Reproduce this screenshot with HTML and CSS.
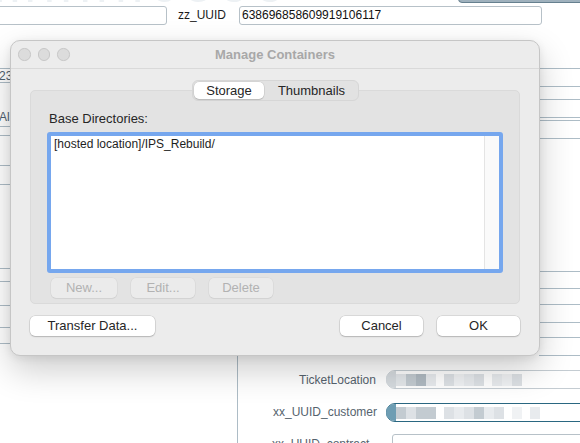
FILE: index.html
```html
<!DOCTYPE html>
<html>
<head>
<meta charset="utf-8">
<link rel="stylesheet" href="styles.css">
</head>
<body>
<div class="canvas">
  <div class="ghost">mnnnceoo</div>
  <svg class="wires" width="580" height="443" viewBox="0 0 580 443">
    <g stroke="#adbcc6" stroke-width="1">
      <line x1="0" y1="68.5" x2="11" y2="68.5"/>
      <line x1="0" y1="82.5" x2="11" y2="82.5"/>
      <line x1="0" y1="126.5" x2="11" y2="126.5"/>
      <line x1="0" y1="135.5" x2="11" y2="135.5"/>
      <line x1="0" y1="165.5" x2="11" y2="165.5"/>
      <line x1="0" y1="184.5" x2="11" y2="184.5"/>
      <line x1="0" y1="268.5" x2="11" y2="268.5"/>
      <line x1="0" y1="281.5" x2="11" y2="281.5"/>
      <line x1="0" y1="305.5" x2="11" y2="305.5"/>
      <line x1="0" y1="327.5" x2="11" y2="327.5"/>
      <line x1="0" y1="343.5" x2="11" y2="343.5"/>
      <line x1="539" y1="68.5" x2="580" y2="68.5"/>
      <line x1="539" y1="86.5" x2="580" y2="86.5"/>
      <line x1="539" y1="99.5" x2="580" y2="99.5"/>
      <line x1="539" y1="117.5" x2="580" y2="117.5"/>
      <line x1="539" y1="120.5" x2="580" y2="120.5"/>
      <line x1="539" y1="138.5" x2="580" y2="138.5"/>
      <line x1="539" y1="271.5" x2="580" y2="271.5"/>
      <line x1="539" y1="288.5" x2="580" y2="288.5"/>
      <line x1="539" y1="304.5" x2="580" y2="304.5"/>
      <line x1="539" y1="322.5" x2="580" y2="322.5"/>
      <line x1="539" y1="337.5" x2="580" y2="337.5"/>
      <line x1="539" y1="355.5" x2="580" y2="355.5"/>
      <line x1="237.5" y1="340" x2="237.5" y2="443"/>
    </g>
  </svg>

  <div class="topbtn"></div>
  <div class="fld f-top1"></div>
  <div class="lbl l-uuid">zz_UUID</div>
  <div class="fld f-uuid">638696858609919106117</div>

  <div class="lbl l-23">23</div>
  <div class="lbl l-al">Al</div>

  <div class="lbl l-loc">TicketLocation</div>
  <div class="fld f-loc">
    <span class="pill pl-grey"></span>
    <span class="blk k1"></span><span class="blk k3"></span><span class="blk k4"></span><span class="blk k2"></span>
    <span class="gap"></span><span class="blk k5"></span><span class="blk k6"></span><span class="blk k2"></span><span class="blk k5"></span>
    <span class="gap"></span><span class="blk k2"></span><span class="blk k6"></span><span class="blk k5"></span>
  </div>

  <div class="lbl l-cust">xx_UUID_customer</div>
  <div class="fld f-cust">
    <span class="pill pl-teal"></span>
    <span class="blk k3"></span><span class="blk k5"></span><span class="blk k3"></span><span class="blk k3"></span>
    <span class="gap"></span><span class="blk k5"></span><span class="blk k2"></span><span class="blk k5"></span><span class="blk k3"></span>
    <span class="blk k2"></span><span class="blk k5"></span><span class="gap"></span><span class="blk k6"></span><span class="gap"></span><span class="blk k2"></span>
  </div>

  <div class="lbl l-contract">xx_UUID_contract</div>
  <div class="fld f-contract"></div>

  <div class="dialog">
    <div class="titlebar">
      <div class="lights">
        <span class="light"></span><span class="light"></span><span class="light"></span>
      </div>
      <div class="title">Manage Containers</div>
      <div class="lights-spacer"></div>
    </div>
    <div class="body">
      <div class="tabs">
        <div class="seg">
          <span class="tab tab-on">Storage</span>
          <span class="tab tab-off">Thumbnails</span>
        </div>
      </div>
      <div class="group">
        <div class="group-label">Base Directories:</div>
        <div class="list">
          <div class="list-rows">
            <div class="row">[hosted location]/IPS_Rebuild/</div>
          </div>
          <div class="list-scroll"></div>
        </div>
        <div class="list-buttons">
          <span class="btn btn-dis b-new">New...</span>
          <span class="btn btn-dis b-edit">Edit...</span>
          <span class="btn btn-dis b-del">Delete</span>
        </div>
      </div>
      <div class="footer">
        <span class="btn btn-push b-transfer">Transfer Data...</span>
        <div class="footer-right">
          <span class="btn btn-push b-ok">Cancel</span>
          <span class="btn btn-push b-ok">OK</span>
        </div>
      </div>
    </div>
  </div>
</div>
</body>
</html>
```

FILE: styles.css
```css
* { box-sizing: border-box; }

html, body {
  margin: 0;
  padding: 0;
  background: #ffffff;
}

body {
  font-family: "Liberation Sans", Arial, Helvetica, sans-serif;
  color: #262626;
}

.canvas {
  position: relative;
  width: 580px;
  height: 443px;
  overflow: hidden;
  background: #ffffff;
}

.ghost {
  position: absolute;
  left: -6px;
  top: -40px;
  font-size: 50px;
  line-height: 50px;
  letter-spacing: 8px;
  color: #edf1f4;
  white-space: nowrap;
}

.wires {
  position: absolute;
  left: 0;
  top: 0;
}

.topbtn {
  position: absolute;
  left: 458px;
  top: -12px;
  width: 130px;
  height: 15px;
  background: #9fb1bd;
  border: 1px solid #66808f;
  border-radius: 4px;
}

.fld {
  position: absolute;
  border: 1px solid #b7c1c8;
  border-radius: 3px;
  background: #ffffff;
  font-size: 12px;
  line-height: 16px;
  color: #111;
  white-space: nowrap;
}

.lbl {
  position: absolute;
  font-size: 12px;
  line-height: 16px;
  white-space: nowrap;
}

.f-top1 { left: -6px; top: 6px; width: 173px; height: 19px; }
.l-uuid { left: 178px; top: 7px; color: #1c1c1c; }
.f-uuid { left: 239px; top: 6px; width: 303px; height: 19px; padding-left: 2px; }

.l-23 { left: -1px; top: 68px; color: #4f6170; }
.l-al { left: -1px; top: 109px; color: #4f6170; }

.l-loc { left: 299px; top: 372px; color: #56636e; }
.l-cust { left: 273px; top: 404px; color: #56636e; }
.l-contract { left: 272px; top: 436px; color: #56636e; }

.f-loc {
  left: 386px; top: 370px; width: 200px; height: 19px;
  border-color: #c4ccd2;
  display: flex;
  align-items: center;
  border-radius: 9px 3px 3px 9px;
}
.f-cust {
  left: 386px; top: 403px; width: 200px; height: 19px;
  border-color: #2a6781;
  display: flex;
  align-items: center;
  border-radius: 9px 3px 3px 9px;
}
.f-contract { left: 392px; top: 434px; width: 200px; height: 19px; border-color: #b7c1c8; }

.pill {
  width: 10px;
  height: 17px;
  border-radius: 9px 0 0 9px;
  margin-left: -1px;
}
.pl-grey { background: #d6dbdf; }
.pl-teal { background: #6e9db3; }

.blk { width: 10px; height: 12px; }
.gap { width: 8px; height: 12px; }
.k1 { background: #e3e7ea; }
.k2 { background: #e8ebee; }
.k3 { background: #c3cbd1; }
.k4 { background: #b0bac2; }
.k5 { background: #dde1e5; }
.k6 { background: #f0f2f4; }

/* dialog */
.dialog {
  position: absolute;
  left: 10px;
  top: 40px;
  width: 530px;
  height: 316px;
  background: #ececec;
  border: 1px solid #c6c6c6;
  border-radius: 10px;
  box-shadow: 0 14px 34px rgba(0, 0, 0, 0.20), 0 2px 8px rgba(0, 0, 0, 0.08);
  display: flex;
  flex-direction: column;
}

.titlebar {
  height: 28px;
  border-bottom: 1px solid #d9d9d9;
  display: flex;
  align-items: center;
}

.lights {
  width: 66px;
  padding-left: 7px;
  display: flex;
  gap: 7px;
}
.light {
  width: 12.5px;
  height: 12.5px;
  border-radius: 50%;
  background: #dcdcdc;
  border: 1px solid #c7c7c7;
}
.lights-spacer { width: 66px; }

.title {
  flex: 1;
  text-align: center;
  font-size: 13px;
  font-weight: bold;
  color: #a8a8a8;
  line-height: 16px;
}

.body {
  padding: 11px 19px 0 19px;
  display: flex;
  flex-direction: column;
}

.tabs {
  display: flex;
  justify-content: center;
  margin-bottom: -11px;
  position: relative;
  z-index: 1;
  padding-left: 1px;
}

.seg {
  display: flex;
  height: 21px;
  padding: 1px;
  background: #e2e2e2;
  border: 1px solid #d6d6d6;
  border-radius: 6px;
}

.tab {
  font-size: 13px;
  line-height: 17px;
  text-align: center;
  color: #262626;
  border-radius: 5px;
}
.tab-on {
  width: 70px;
  background: #ffffff;
  box-shadow: 0 0 0 0.5px rgba(0, 0, 0, 0.12), 0 1px 1px rgba(0, 0, 0, 0.12);
}
.tab-off { width: 93px; padding-left: 2px; }

.group {
  height: 214px;
  background: #e3e3e3;
  border: 1px solid #dadada;
  border-radius: 5px;
  padding: 20px 16px 0 16px;
  display: flex;
  flex-direction: column;
}

.group-label {
  font-size: 13px;
  line-height: 16px;
  padding-left: 2px;
  color: #262626;
}

.list {
  margin-top: 5px;
  height: 141px;
  border: 4px solid #76a7ee;
  border-radius: 3px;
  background: #ffffff;
  display: flex;
}

.list-rows {
  flex: 1;
  padding: 1px 0 0 3px;
}

.row {
  font-size: 12px;
  line-height: 14px;
  color: #1e1e1e;
}

.list-scroll {
  width: 15px;
  background: #fafafa;
  border-left: 1px solid #e4e4e4;
}

.list-buttons {
  margin-top: 5px;
  padding-left: 4px;
  display: flex;
  gap: 14px;
}

.btn {
  height: 20px;
  font-size: 13px;
  line-height: 20px;
  text-align: center;
  border-radius: 5px;
  display: block;
}

.btn-dis {
  background: #ebebeb;
  color: #b2b2b2;
  box-shadow: 0 0 0 0.5px rgba(0, 0, 0, 0.06), 0 1px 1px rgba(0, 0, 0, 0.05);
}
.b-new { width: 66px; }
.b-edit { width: 64px; }
.b-del { width: 64px; }

.footer {
  margin-top: 12px;
  display: flex;
  justify-content: space-between;
}

.footer-right {
  display: flex;
  gap: 14px;
}

.btn-push {
  background: #ffffff;
  color: #262626;
  box-shadow: 0 0 0 0.5px rgba(0, 0, 0, 0.16), 0 1px 1.5px rgba(0, 0, 0, 0.16);
}
.b-transfer { width: 125px; }
.b-ok { width: 83px; }
```
